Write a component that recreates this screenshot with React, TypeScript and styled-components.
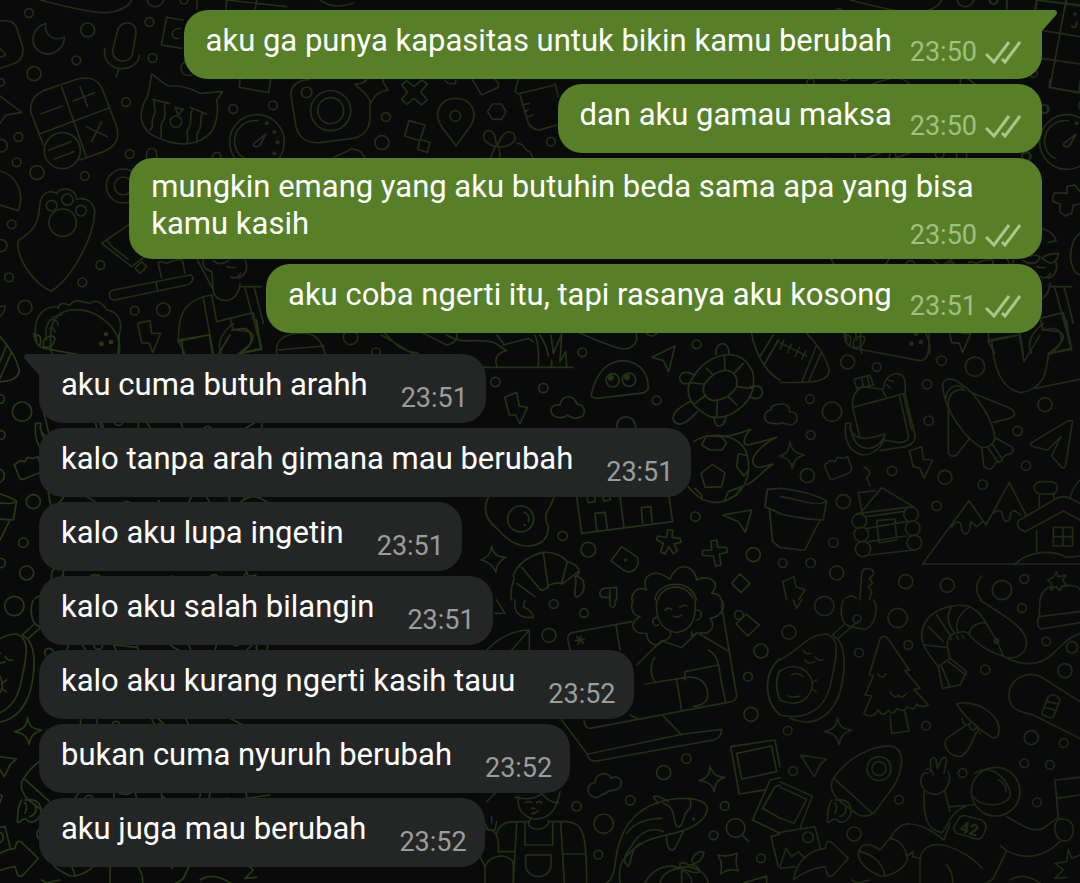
import React from 'react';
import styled, { createGlobalStyle, css } from 'styled-components';

const GlobalStyle = createGlobalStyle`
  *, *::before, *::after { box-sizing: border-box; }
  body {
    margin: 0;
    background: #0a0a0a;
    font-family: Roboto, "Liberation Sans", sans-serif;
  }
`;

const Page = styled.main`
  position: relative;
  isolation: isolate;
  min-height: 100vh;
  padding: 10px 38px 16px 39px;
  overflow: hidden;
  background: #0a0a0a;
`;

const Wallpaper = styled.svg`
  position: absolute;
  inset: 0;
  z-index: -1;
  width: 100%;
  height: 100%;
`;

const Group = styled.ul<{ $own?: boolean }>`
  display: flex;
  flex-direction: column;
  align-items: ${(p) => (p.$own ? 'flex-end' : 'flex-start')};
  gap: 5px;
  margin: 0;
  padding: 0;
  list-style: none;

  & + & { margin-top: 21px; }
`;

const Bubble = styled.li<{ $own?: boolean; $tail?: boolean; $long?: boolean }>`
  position: relative;
  display: flex;
  gap: ${(p) => (p.$own ? '18px' : '33px')};
  max-width: 91%;
  min-height: ${(p) => (p.$long ? '101px' : '69px')};
  padding: ${(p) => (p.$own ? '12px 20px 11px 22px' : '12px 18px 9px 22px')};
  border-radius: 24px;
  background: ${(p) => (p.$own ? '#577f28' : '#242626')};
  ${(p) => p.$tail && (p.$own
    ? css`border-top-right-radius: 0;`
    : css`border-top-left-radius: 0;`)}
  ${(p) => p.$long && css`
    padding-top: 10px;
    padding-bottom: 8px;
  `}
`;

const Tail = styled.svg<{ $own?: boolean }>`
  position: absolute;
  top: 0;
  width: 17px;
  height: 22px;
  ${(p) => (p.$own ? css`left: calc(100% - 1px);` : css`right: calc(100% - 1px); transform: scaleX(-1);`)}
  fill: ${(p) => (p.$own ? '#577f28' : '#242626')};
`;

const Text = styled.p`
  display: flow-root;
  margin: 0;
  font-size: 31px;
  line-height: 37px;
  color: #ffffff;
`;

const Meta = styled.span<{ $own?: boolean; $floating?: boolean }>`
  align-self: flex-end;
  display: flex;
  align-items: center;
  gap: 8px;
  font-size: 27px;
  line-height: 31px;
  color: ${(p) => (p.$own ? '#a1bf80' : '#9b9c9c')};
  ${(p) => p.$floating && css`
    float: right;
    margin-top: 15px;
  `}
`;

const Stamp = styled.time`
  white-space: nowrap;
`;

const Checks = styled.svg`
  flex: none;
  width: 37px;
  height: 24px;
  fill: none;
  stroke: #a9c78a;
  stroke-width: 3;
`;

type Scene = {
  at: [number, number];
  color: string;
  rings: number[][];
  dots?: number[][];
  paths: string[];
};

/* Doodles are drawn on a grid three times finer than the screen. */
const scenes: Record<string, Scene> = {
  desk: {
    at: [0, 0],
    color: '#222e15',
    rings: [[87, 39, 13], [263, 90, 21], [229, 181, 13], [102, 221, 21], [2, 247, 11], [378, 306, 13], [55, 411, 13], [3, 437, 19], [50, 487, 13], [389, 462, 13], [111, 518, 21], [254, 528, 13], [35, 673, 13], [3, 737, 18], [27, 832, 13], [301, 795, 13], [247, 847, 13], [75, 922, 21], [448, 66, 13], [458, 174, 13], [466, -5, 25], [552, 0, 12], [700, 327, 13], [819, 316, 13], [650, 470, 13], [565, 205, 22], [187, 452, 54], [528, 365, 17], [771, 426, 82], [370, 558, 51], [370, 558, 27], [155, 617, 16], [202, 599, 17], [243, 632, 16], [188, 668, 41]],
    dots: [[800, 370, 6], [823, 396, 6], [833, 427, 6], [823, 460, 6]],
    paths: [
      'M120 0C180 15 270 40 320 38C360 36 390 15 395 0',
      'M0 63C30 60 45 65 52 90L68 140C72 165 65 180 45 190L0 205M0 145L18 165L0 172',
      'M138 70C95 85 88 130 115 152C145 175 190 155 194 112C160 125 130 105 138 70Z',
      'M352 95C358 58 412 60 408 100L398 160C392 195 335 190 338 150ZM314 145C305 225 415 220 418 165M356 208L348 232',
      'M550 60L500 52L484 135L545 145M540 85C510 85 510 120 535 115',
      'M130 435L92 335C90 300 105 285 130 272L230 238C275 225 300 245 310 275L350 380C360 420 345 440 310 455L240 480M185 260L258 468M118 402L325 325M122 342L187 318M220 303L283 278M240 260L263 320M260 380L322 410M305 365L275 425M147 450L213 425M162 478L222 455',
      'M455 222C450 250 450 265 442 290C410 340 420 390 470 412C540 445 600 435 635 395C655 360 655 320 650 300L668 275C640 275 620 280 600 280C570 262 530 255 505 258C480 245 470 230 455 222Z',
      'M457 298L508 310M570 322L620 342M465 300C455 320 475 330 460 350C450 370 465 380 450 390M498 308C485 330 505 345 488 365C475 385 490 400 482 415M578 325C565 350 580 365 565 385C555 400 570 415 560 430M608 338C595 360 610 375 595 395C585 405 595 415 590 428M525 322L550 328L535 345Z',
      'M775 362C700 355 680 450 735 475M798 402L762 430C755 440 775 445 780 435Z',
      'M0 288L65 337L18 345L0 370M0 513C50 525 75 580 55 632L0 615M440 475V462C440 440 470 440 470 462V475',
      'M55 722C120 680 115 650 120 610C125 575 150 570 170 580C180 560 225 560 230 598C260 590 285 610 284 640C280 720 210 840 153 874C100 850 45 770 55 722Z',
      'M400 665L305 730L395 800L440 765M320 720L338 742L385 778M405 805L420 820L440 800L425 785Z',
      'M340 870L570 825C585 825 580 850 560 855L345 900C325 900 322 875 340 870ZM468 848L474 874M485 835L475 790C480 775 500 800 510 785C530 780 550 775 548 785L555 820',
      'M110 1020C95 960 125 915 175 922M140 1020C130 980 150 945 185 945M150 960Q170 955 175 975M150 985Q160 980 165 995M0 920L15 918Q18 930 0 950',
      'M720 238L718 262L806 278L812 238M592 0L590 28M680 0L678 28M680 0L860 20M770 0L765 28M960 0Q1000 30 1060 10',
    ],
  },
  camera: {
    at: [260, 60],
    color: '#222e15',
    rings: [[140, 97, 16], [212, 152, 60], [212, 152, 39], [378, 171, 13], [366, 248, 21], [586, 168, 16], [873, 245, 13]],
    paths: [
      'M150 58C110 60 85 80 95 120L108 200C120 240 145 250 180 248L280 235C320 225 330 200 330 170V130',
      'M320 58C315 68 305 72 285 72C300 90 325 100 332 130C345 105 355 95 384 90C380 80 370 75 368 58',
      'M425 75L440 62L462 80L485 60L502 72L482 97L502 120L485 135L462 115L440 133L425 118L443 97Z',
      'M447 182L495 195L480 242L434 228ZM480 238L510 247L502 277L473 268Z',
      'M587 115C640 115 655 165 630 200L588 257L545 200C520 165 535 115 587 115Z',
      'M683 155L697 132L725 132L738 155L725 178L697 178Z',
      'M638 60L665 105L715 82V70L705 58M555 62L565 70L585 72L588 60',
      'M775 58L765 95L780 105L805 190C815 205 830 212 845 208L890 195M780 100L885 75M885 70L895 110M788 135L808 130M795 155L805 150M800 172L820 165',
      'M712 260C650 250 670 200 695 215C710 225 705 245 712 260C720 230 740 205 760 220C780 245 740 265 712 260ZM705 262L690 297M718 262L720 297M770 250C800 250 790 275 810 275L820 297',
      'M215 297C240 280 265 275 275 265C290 275 300 265 305 280L318 297',
    ],
  },
  taco: {
    at: [70, 240],
    color: '#222f15',
    rings: [[194, 212, 13], [280, 209, 20], [842, 292, 22], [918, 337, 13]],
    dots: [[108, 283, 6], [95, 312, 6], [122, 306, 6]],
    paths: [
      'M-35 205C-30 180 -10 195 0 195C15 170 45 190 60 190C75 175 100 190 110 210C150 215 155 250 150 275M-55 340C-70 250 -40 205 20 210C80 205 160 270 148 340',
      'M325 305C325 230 335 180 425 165M400 175L430 340M425 165L440 245L480 235M325 305L345 340M325 305L415 285',
      'M380 55L430 150C430 190 505 200 510 130M425 95L430 150M400 60C395 90 420 90 425 95M505 115C530 105 535 80 525 60M470 80Q485 85 495 82M430 62Q450 80 475 62M482 110Q500 120 512 100',
      'M510 140H575M525 145L575 330M552 140L580 250',
      'M480 235L550 218L575 325L505 340C550 310 560 290 540 275L490 270ZM490 250C450 280 440 320 455 340',
      'M203 250L240 242L245 280L272 280L248 338L238 310L215 308Z',
      'M620 340C615 300 640 285 680 280C730 275 750 290 765 340M625 330L762 318',
      'M945 280C975 310 985 330 1045 340M935 285L1030 342M1060 280L1130 315C1160 310 1165 290 1160 280',
    ],
  },
  calendar: {
    at: [980, 0],
    color: '#222e15',
    rings: [[195, 327, 12], [138, 468, 13], [40, 0, 12], [160, 220, 12]],
    dots: [[285, 42, 5]],
    paths: [
      'M170 0L165 30M80 0V25M258 0L210 262L300 278M170 0L300 18M190 92L300 110M185 175L300 192M290 65Q290 90 275 78',
      'M260 560L285 555L300 575M260 560L262 580L225 578Q215 590 220 605L240 612V635L255 648L275 640L280 615L300 612',
      'M185 685C205 690 225 705 228 722L205 728M150 770Q160 760 180 770Q170 800 145 785M185 775Q200 760 235 760Q235 785 210 790ZM300 700Q270 720 272 780Q280 820 300 825',
    ],
  },
  turtle: {
    at: [480, 320],
    color: '#233317',
    rings: [[307, 97, 13], [46, 186, 14], [190, 204, 14], [650, 73, 13], [530, 241, 13], [248, 648, 14], [325, 689, 22], [646, 590, 14], [820, 704, 21], [122, 597, 39], [515, 30, 18], [398, 181, 20], [447, 179, 20]],
    dots: [[392, 173, 9], [441, 172, 9], [437, 720, 5], [134, 615, 4]],
    paths: [
      'M335 220C350 150 390 120 435 122C490 130 505 170 505 205Q500 218 480 220L350 235Q330 232 335 220Z',
      'M516 112L585 78L566 155L550 122Z',
      'M74 232L110 217L118 258L142 262L120 312L107 285L88 285Z',
      'M235 292C205 290 205 250 240 255C245 220 285 225 290 252C320 255 320 290 295 293C285 298 270 290 262 285C255 292 245 294 235 292Z',
      'M-100 45C-60 70 -40 60 0 62C50 62 50 75 80 92C45 100 45 120 50 137M-110 142H280M70 75L145 55L160 65M50 45L70 70M165 45C180 80 175 110 175 138M180 45C195 70 200 80 205 108M213 45L220 100L245 42L240 125L257 95L260 138M215 120V138',
      'M300 40C340 55 390 80 430 87C465 85 475 60 468 40',
      'M735 105C780 100 800 120 818 155C825 190 820 220 800 245C770 280 730 300 690 290C650 270 620 240 625 200C640 160 680 110 735 105ZM730 152C760 148 775 170 770 200C755 225 730 240 700 242C670 235 665 210 675 190C690 170 710 155 730 152Z',
      'M733 105L735 150M680 145L700 165M630 188L672 192M645 250L678 225M712 245L710 290M745 230L770 255M770 200L815 205M762 160L790 130M708 103C705 60 750 60 747 103M628 190C590 200 590 150 625 158L645 165M810 200L835 198C855 210 850 235 825 236L808 230M630 245C600 260 575 280 580 300C595 325 620 310 652 275M703 290C700 330 735 325 738 290',
      'M815 40C825 100 860 160 900 180M840 110L880 45M855 130L895 60M900 252Q870 255 873 270C845 275 850 310 875 310L900 312M410 322C410 280 465 280 467 322',
      'M640 365C700 330 780 345 800 400C820 470 790 530 720 547C670 550 640 520 625 500M663 460L697 433L735 458L725 500L675 502ZM665 375L690 390H725L740 370L725 350L680 347ZM800 405L775 402L770 440L792 468L806 450M645 505L665 525V540M785 500L745 515L732 545L770 525Z',
      'M735 350C770 345 790 335 812 328C795 345 785 370 800 375C830 370 860 360 890 352C850 370 810 410 820 430C830 450 850 440 880 432C850 450 830 480 800 495',
      'M25 532C5 570 20 600 50 625C80 660 110 680 145 678C190 675 205 650 205 620C190 590 200 575 210 560L222 532M133 577Q150 585 145 605',
      'M290 530L305 640L578 605L567 530M420 530L432 622M350 630L345 580L375 577L382 625M488 610L484 563L512 560L517 607M320 530L325 548L345 545V530M368 530L372 543L392 540L388 530',
      'M728 585L815 570L796 637L775 605Z',
      'M563 630L578 630L576 652L600 655L604 667L582 672L592 692L580 702L567 680L555 702L542 695L550 670L530 660L533 648L560 652Z',
      'M693 663L710 660L713 682L740 682L742 697L718 702L723 735L707 738L700 708L668 706L667 692L695 690Z',
      'M425 680L472 712Q480 730 465 748Q450 762 430 750L393 722Z',
      'M35 678C40 705 55 712 78 712C55 725 50 735 48 757C40 735 25 725 3 720C25 712 33 700 35 678Z',
      'M95 840C85 800 110 780 100 765C115 730 150 705 190 697C225 695 250 710 262 725C300 735 305 760 288 768C320 775 320 820 290 832C275 825 295 790 285 770M125 742L180 808M190 697L205 805M262 725L245 790M295 755L245 793M180 808C190 815 200 805 205 797Q225 785 245 790M110 790L165 830',
      'M455 840C455 810 480 800 500 810C480 770 520 740 570 778C585 730 640 725 650 780C690 760 725 790 695 820Q730 820 725 860M535 840C540 800 610 780 640 835M525 840C530 785 630 770 650 840',
      'M780 762L810 790L783 818L755 790ZM410 840V802L370 805C355 815 355 835 375 832H390M390 810V840',
      'M862 508L900 505M862 508L855 560L900 580M868 565L878 665L900 682',
    ],
  },
  cabin: {
    at: [780, 320],
    color: '#202b15',
    rings: [[203, 126, 21], [290, 141, 13], [485, 122, 14], [585, 140, 29], [90, 237, 13], [441, 193, 14], [156, 275, 29], [446, 302, 14], [795, 254, 21], [92, 345, 13], [713, 333, 14], [82, 467, 21], [336, 453, 14], [738, 437, 14], [495, 472, 21], [608, 494, 14], [190, 545, 21], [470, 558, 14], [160, 668, 14], [8, 729, 13], [92, 729, 14], [170, 759, 21], [377, 785, 21], [502, 796, 21], [666, 810, 29], [733, 777, 13], [238, 603, 22], [244, 643, 22], [249, 687, 23], [393, 583, 22], [398, 625, 22], [403, 668, 22]],
    dots: [[394, 71, 7], [423, 66, 7], [408, 42, 6]],
    paths: [
      'M80 40C120 80 140 120 148 150C148 185 100 190 0 187M65 187L110 75M85 187L125 95M0 68L80 108M12 60L0 88M35 72L22 98M58 82L45 110M78 92L65 118',
      'M192 40C195 70 205 85 240 88L420 122C450 120 445 90 448 40M192 50C210 40 215 50 210 75M220 80C215 50 250 40 255 55C250 80 235 85 220 80',
      'M625 60L718 45L732 125L780 45M635 60C640 130 660 210 725 218C790 205 800 160 805 105L830 85C850 70 850 30 820 25L785 30M805 102L873 88L860 0M765 205L900 178',
      'M240 355L218 262C215 230 225 215 245 200L305 207L318 230M218 262L375 220M230 205L222 178L270 165L280 195ZM245 173L250 200M262 168L268 195M310 205C315 165 350 150 370 170C380 190 375 210 375 220L405 345C408 365 395 375 375 380L300 392M358 225L385 345C388 360 375 365 360 368L310 360M370 222L395 330M325 180L340 185M320 195L332 205',
      'M197 310H213L210 325C225 370 270 355 315 342C310 380 280 405 250 405C215 400 190 370 197 310M212 325C225 400 285 400 312 352',
      'M488 195C490 175 515 170 540 190C590 220 640 300 645 355Q635 385 605 383C560 360 490 270 488 195ZM505 245C510 215 530 205 555 210M498 235C500 200 530 190 550 205M580 220L690 265C710 275 705 290 690 295L640 307M505 250V400Q515 415 530 405L567 358M605 385L612 440Q630 455 640 440L650 425M622 380L655 428L668 420L637 372M648 355L695 380C705 395 695 405 680 403L665 415',
      'M388 393L425 380L430 418L458 420L432 475L420 445L400 440Z',
      'M878 303Q870 300 860 305L752 370Q750 378 760 380L803 390L843 350L815 408L845 442Q855 448 857 435Z',
      'M0 252C25 250 30 265 28 275C55 275 60 305 35 315L0 308M30 365C35 395 50 400 73 405C50 412 42 420 37 445C32 420 20 415 0 408C20 402 28 390 30 365',
      'M133 435L150 422L165 425L172 412L190 415L203 410L215 445Q215 455 205 460L160 478Q150 480 147 470Z',
      'M252 440C270 450 275 460 262 470C255 480 270 485 270 498',
      'M0 505C50 510 100 520 140 543L130 600C80 600 40 590 0 582M0 530C50 535 100 560 135 547M120 600L75 690C50 690 20 685 0 682',
      'M245 575L305 503L400 560L235 580M245 570L235 518L285 512M260 625L380 605M265 665L380 648M270 705L400 690M258 590L370 575M290 602L345 597L350 660L297 668Z',
      'M428 732L567 542L618 615L688 488L738 585M428 732H900M515 620C530 600 545 600 545 630C555 650 570 645 572 605L590 620L608 605M640 580Q665 560 668 590C675 610 690 610 692 580C700 565 710 575 722 585',
      'M770 632V695M735 635C705 625 710 600 725 597L830 535Q850 525 870 535L900 550M735 635L850 573L900 600M820 622H878V678H820ZM849 622V678M820 650H878M778 522V560M822 522V535M785 522C755 522 755 485 785 485H815C840 490 835 520 815 522ZM870 532Q880 500 900 480M705 732C750 690 820 690 860 712L900 708',
      'M55 840L75 810L48 800L42 770L8 785L20 840M240 840L245 760Q248 745 260 746Q285 745 280 765L268 775L278 790L265 800L275 815L268 840M195 835Q215 820 230 835M605 768C585 790 585 820 605 840',
      'M830 755L835 770L858 765L848 782L860 795L845 800L840 812L828 800L812 810L815 790L803 780L820 772ZM780 840Q790 800 820 800M850 800Q890 790 900 810',
    ],
  },
  laptop: {
    at: [480, 600],
    color: '#223016',
    rings: [[221, 12, 13], [312, 39, 13], [207, 106, 21], [843, 153, 21], [804, 230, 13], [813, 343, 21], [619, 476, 14], [551, 518, 21], [290, 619, 14], [451, 601, 14], [371, 671, 29], [355, 764, 13], [734, 618, 13], [701, 706, 13], [843, 775, 13], [767, 684, 28], [777, 45, 13]],
    dots: [[641, 657, 5]],
    paths: [
      'M105 0C100 40 120 55 160 52Q160 35 130 20L135 0M50 0L75 40H45M390 0V15Q397 30 405 15V0',
      'M20 150C60 110 100 90 148 90V150M148 90L95 150',
      'M270 150L263 115Q265 100 280 97L455 65M408 75L420 150M290 110L310 130M285 122L312 118M303 108L295 132M725 20L770 285Q770 300 755 305L330 385Q315 385 312 360M245 360L320 460Q325 485 350 483L700 420Q725 415 725 388L610 402L325 462M550 348L605 405M450 345L470 355',
      'M530 0C525 60 545 90 590 98C640 90 650 50 645 0M535 75C515 85 512 50 532 52M648 60C668 60 670 30 650 30M460 0C450 20 455 45 480 50C445 65 455 105 500 100C500 130 530 145 545 125M725 0C740 20 725 50 690 55C710 80 690 105 660 98M555 30Q565 20 575 28M600 22Q610 12 620 18M580 48Q595 55 605 45',
      'M545 125C565 120 575 110 572 95M635 95V108L652 98M470 195L545 122L605 143L652 98L745 153M525 172C510 190 510 230 525 245M685 150C720 170 715 200 725 250L737 305M495 252L620 232M590 240L605 330M615 240V215L715 195M620 232C680 225 690 280 680 300Q670 315 640 320',
      'M798 42L838 75L803 108L768 72ZM900 175C850 220 850 300 900 345M900 210Q880 250 900 300',
      'M752 440L885 420L900 500M752 440L778 582L855 570M770 460L875 438L890 515L785 537ZM818 660L870 540L900 533M818 660L900 700M848 625L885 560L900 555M848 625L900 655M900 702L873 710L895 800',
      'M345 592C315 585 320 550 345 548C345 515 390 515 393 535C425 520 435 560 410 568C395 575 385 568 378 580C365 580 360 595 345 592Z',
      'M690 498C700 525 710 530 735 532C712 540 705 550 703 575C695 550 680 545 658 542C680 535 690 525 690 498Z',
      'M380 849C410 830 400 790 415 740C430 680 470 620 560 600C610 590 670 595 682 620C685 650 650 680 600 695C550 710 480 710 430 780Q415 800 420 849M535 612L520 590C530 585 550 595 565 605M445 800C430 790 430 770 450 745C480 690 520 680 550 695M445 800C460 770 450 750 480 730M560 710C560 740 570 760 585 745L610 695M550 610C590 625 575 650 590 680C615 685 605 640 630 625Q635 610 630 600M440 700C460 670 500 655 545 655',
      'M785 705L807 725M713 765C735 770 750 770 772 760C765 785 768 795 775 812C750 805 735 812 722 822C728 795 725 780 713 765Z',
      'M495 849C520 800 570 790 600 805C640 790 680 820 685 849M540 849Q550 810 600 805M605 849V810Q635 820 635 849M600 790Q615 785 625 795Q650 790 660 815Q640 825 600 800ZM635 785C640 760 660 750 672 758C670 775 655 790 640 790M790 849L860 828V849',
      'M115 590C110 630 130 650 165 658C210 655 230 630 240 575M105 592C140 600 170 595 185 580C200 600 220 610 235 608M135 608Q145 602 155 608M170 608Q178 602 185 608M155 625H165M155 640Q165 642 175 632M150 658Q145 665 145 675C165 695 190 690 205 672V662M145 665C100 665 60 660 50 700M205 665H260C310 670 320 700 320 849M135 668V735H218V668M110 668L100 849M242 665L253 849M137 765H213V800C205 840 145 840 137 800ZM55 755H105M250 762H318',
      'M15 849V800C30 760 90 760 100 790V849M0 690C40 680 60 700 55 755M20 605L45 580M15 670L25 690H45L50 665M35 650V668M0 770L15 800',
    ],
  },
  astronaut: {
    at: [780, 600],
    color: '#1f2a15',
    rings: [[27, 97, 21], [133, 18, 29], [353, 54, 29], [237, 158, 13], [385, 135, 13], [616, 209, 14], [726, 24, 13], [799, 124, 13], [855, 212, 21], [23, 392, 13], [438, 377, 13], [754, 413, 21], [851, 429, 13], [39, 513, 13], [548, 519, 13], [733, 490, 13], [810, 494, 13], [357, 599, 13], [771, 607, 13], [222, 702, 21], [84, 712, 16], [297, 506, 36], [297, 506, 21], [876, 142, 17], [231, 57, 12], [647, 575, 73]],
    dots: [[649, 124, 9]],
    paths: [
      'M0 180C60 150 80 105 135 102C190 110 165 190 150 260C130 340 60 360 0 345M175 120C205 160 190 250 175 290C150 350 100 385 30 355M0 215C40 180 100 210 97 260C85 310 40 320 0 300M70 150Q75 165 92 160M75 180Q85 195 105 185M105 170Q115 185 128 180M35 225Q50 215 70 230M25 288Q40 295 60 288M95 250L110 240M95 265L108 275',
      'M190 0L185 15C180 50 190 75 210 80L255 88C285 75 290 40 288 15L280 0M160 102L190 75M175 115L235 62M158 105L175 120M40 0L50 25L65 0',
      'M300 118Q312 100 325 118L388 210L375 212L420 265L402 268L445 315Q420 325 410 312Q405 335 380 320Q375 340 350 325Q340 350 325 330Q310 355 295 330Q275 360 252 340L275 288L255 285L280 228L268 225ZM330 345L335 400L387 393L375 335M293 222Q305 240 318 222M330 275Q345 300 355 285Q365 300 380 280',
      'M425 105C430 30 520 5 570 20C610 40 615 70 650 120L670 168C620 155 590 130 568 105C560 90 540 95 525 100C495 110 500 140 510 175L475 200C445 160 425 140 425 105ZM435 135L500 142M445 80L490 125M470 45L510 105M515 20Q490 60 525 100M570 20C540 40 520 70 535 100M615 68Q570 70 568 105M510 110L515 120M530 108L535 118M545 105L552 115M475 200L487 265L540 255L560 215L510 175M485 200L510 260M505 185L558 225',
      'M600 0C660 40 740 80 740 130C735 175 690 180 670 168M670 168C720 200 780 200 820 160C850 130 870 110 900 100M780 0L778 45Q765 80 785 87L900 68M778 50L900 35',
      'M900 305L790 235C740 205 685 240 687 290C690 330 720 335 760 345L900 415M805 290Q825 275 840 300L820 352Q800 355 785 340ZM800 305L835 312M795 322L830 332',
      'M172 353C178 382 190 388 215 390C192 398 182 408 177 433C170 405 158 400 133 395C160 388 170 380 172 353Z',
      'M530 312C580 295 660 340 657 390Q655 420 635 412C590 385 550 345 530 312ZM545 355C550 375 560 380 570 370C565 390 580 395 590 382L600 400M555 378L500 415C485 440 510 470 540 470C560 465 580 420 590 395',
      'M62 466L140 477L122 492L103 530Z',
      'M158 540C200 470 290 430 340 440C380 455 365 520 340 560L285 635Q265 655 235 645L175 600C155 580 150 555 158 540ZM165 538L275 638M155 600C140 625 145 640 142 665C150 675 155 650 170 658C180 675 205 665 213 640C215 610 200 595 165 600M165 640Q175 620 165 608M180 650Q205 640 195 615',
      'M0 545L97 588L60 685M0 562L80 598L42 670L0 655M0 697L105 680L122 748M0 800L18 745L35 770L55 755L75 775M0 805L45 800',
      'M40 840C50 780 90 750 135 745L140 728Q148 720 158 730L205 775L160 825Q145 835 142 822L135 800C100 805 70 815 40 840Z',
      'M585 520C640 480 700 560 690 590C670 625 600 620 580 590M655 540Q680 550 678 575',
      'M425 530C415 560 440 585 470 583C505 575 515 540 505 515M452 515V480Q460 465 468 480L472 505L485 478Q495 465 500 480L492 520M425 530Q430 515 445 520M440 508Q455 505 460 525M432 575C430 650 440 690 485 698C500 690 505 640 555 620M495 575L510 635M510 620L580 615M330 715C350 680 370 670 390 672C430 675 460 695 492 720L510 670',
      'M235 760C240 730 265 725 300 750L330 715C365 720 380 750 382 780C370 810 330 830 300 828C260 810 235 790 235 760ZM240 755C290 765 310 800 315 828M385 765L400 755L398 770L420 775M420 849V775C430 730 470 730 500 738C540 750 580 775 607 805M500 795Q520 820 518 849',
      'M680 650C720 670 750 700 790 685L830 655M662 738L680 752L640 835Q625 849 615 849M680 752C730 780 790 775 840 725M690 840Q730 815 780 849',
      'M540 650Q550 645 560 648L605 660Q620 670 618 685L608 708Q600 720 585 716L530 700Q518 690 522 680Z',
      'M825 680Q825 655 850 657Q880 660 880 690Q878 722 855 723Q825 720 825 680ZM835 655L825 540L900 532M830 595L900 585M900 765L875 775L865 748L860 785L825 790L850 810L825 835L860 832M215 840L230 849L270 840',
    ],
  },
};

function Doodles({ name, shift = 0, tint }: { name: string; shift?: number; tint?: string }) {
  const scene = scenes[name];
  const color = tint ?? scene.color;
  return (
    <g
      transform={`translate(${scene.at[0] + shift} ${scene.at[1]}) scale(0.3333)`}
      stroke={color}
      strokeWidth={5}
      strokeLinejoin="round"
      strokeLinecap="round"
      fill="none"
    >
      {scene.rings.map(([x, y, r], i) => <circle key={i} cx={x} cy={y} r={r} />)}
      {scene.dots?.map(([x, y, r], i) => <circle key={i} cx={x} cy={y} r={r} fill={color} stroke="none" />)}
      {scene.paths.map((d) => <path key={d} d={d} />)}
    </g>
  );
}

type Message = { text: string; time: string; long?: boolean };

const sent: Message[] = [
  { text: 'aku ga punya kapasitas untuk bikin kamu berubah', time: '23:50' },
  { text: 'dan aku gamau maksa', time: '23:50' },
  { text: 'mungkin emang yang aku butuhin beda sama apa yang bisa kamu kasih', time: '23:50', long: true },
  { text: 'aku coba ngerti itu, tapi rasanya aku kosong', time: '23:51' },
];

const received: Message[] = [
  { text: 'aku cuma butuh arahh', time: '23:51' },
  { text: 'kalo tanpa arah gimana mau berubah', time: '23:51' },
  { text: 'kalo aku lupa ingetin', time: '23:51' },
  { text: 'kalo aku salah bilangin', time: '23:51' },
  { text: 'kalo aku kurang ngerti kasih tauu', time: '23:52' },
  { text: 'bukan cuma nyuruh berubah', time: '23:52' },
  { text: 'aku juga mau berubah', time: '23:52' },
];

function MessageMeta({ message, own }: { message: Message; own?: boolean }) {
  return (
    <Meta $own={own} $floating={message.long}>
      <Stamp dateTime={message.time}>{message.time}</Stamp>
      {own && (
        <Checks viewBox="0 0 37 24" aria-hidden="true">
          <path d="M1 13L9 21L24 1M17 18L20 21L35 1" />
        </Checks>
      )}
    </Meta>
  );
}

function MessageGroup({ messages, own }: { messages: Message[]; own?: boolean }) {
  return (
    <Group $own={own}>
      {messages.map((m, i) => (
        <Bubble key={m.text} $own={own} $tail={i === 0} $long={m.long}>
          {i === 0 && (
            <Tail $own={own} viewBox="0 0 17 22" aria-hidden="true">
              <path d="M0 0H13C16 0 17 3 15 5L1 21V22H0Z" />
            </Tail>
          )}
          <Text>
            {m.text}
            {m.long && <MessageMeta message={m} own={own} />}
          </Text>
          {!m.long && <MessageMeta message={m} own={own} />}
        </Bubble>
      ))}
    </Group>
  );
}

export default function App() {
  return (
    <>
      <GlobalStyle />
      <Page>
        <Wallpaper aria-hidden="true">
          <Doodles name="desk" />
          <Doodles name="desk" shift={810} />
          <Doodles name="camera" />
          <Doodles name="taco" />
          <Doodles name="taco" shift={810} />
          <Doodles name="calendar" />
          <Doodles name="turtle" />
          <Doodles name="cabin" />
          <Doodles name="cabin" shift={-810} tint="#263a16" />
          <Doodles name="laptop" />
          <Doodles name="astronaut" />
          <Doodles name="astronaut" shift={-810} tint="#263a16" />
          <text
            transform="translate(959 832) rotate(14)"
            fill="#222e16"
            fontFamily="Roboto, sans-serif"
            fontSize="16"
            fontWeight="700"
          >
            42
          </text>
        </Wallpaper>
        <MessageGroup messages={sent} own />
        <MessageGroup messages={received} />
      </Page>
    </>
  );
}
